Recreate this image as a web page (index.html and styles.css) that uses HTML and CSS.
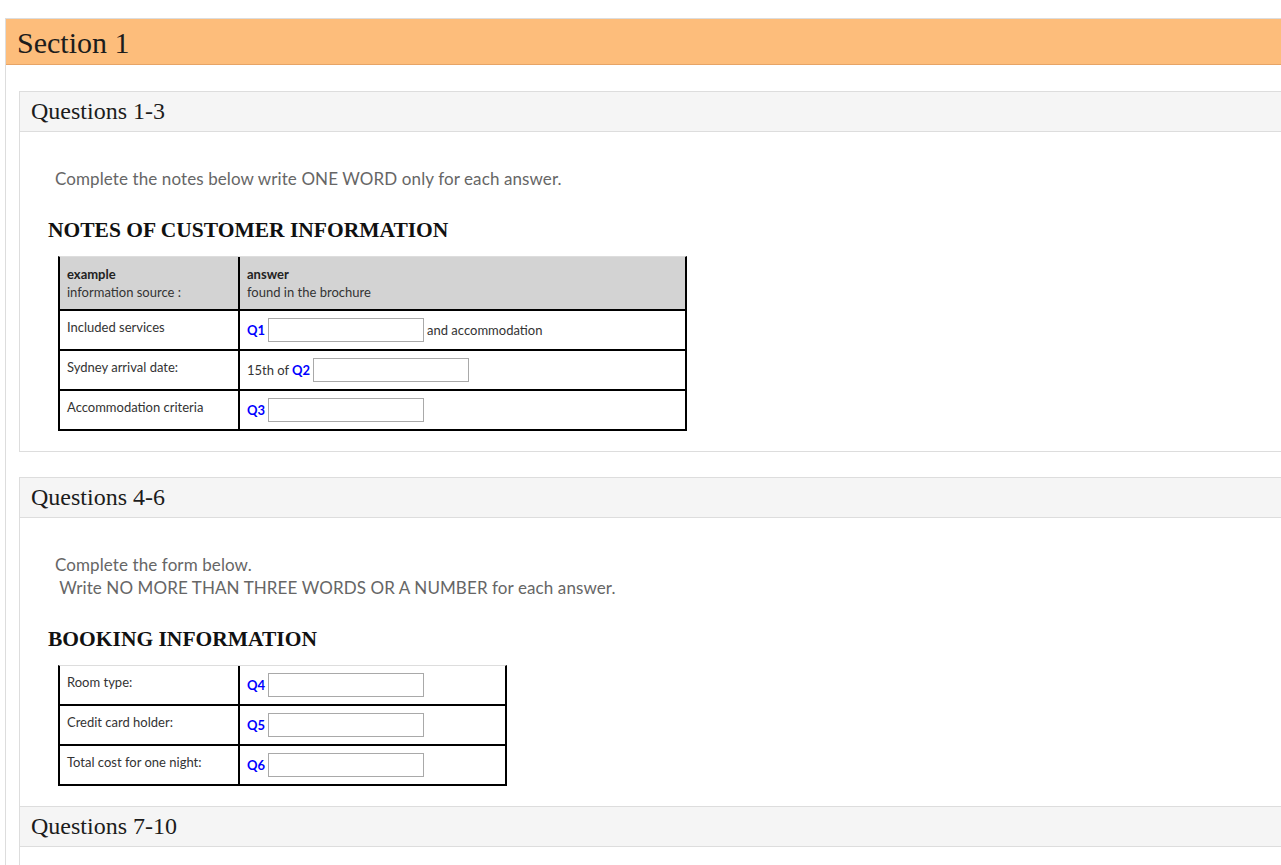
FILE: index.html
```html
<!DOCTYPE html>
<html lang="en">
<head>
<meta charset="utf-8">
<title>Section 1</title>
<link rel="stylesheet" href="styles.css">
</head>
<body>
<div class="section-panel">
  <div class="section-head">Section 1</div>
  <div class="section-body">

    <div class="q-panel q-panel-spaced">
      <div class="q-head">Questions 1-3</div>
      <div class="q-body">
        <p class="instr">Complete the notes below write ONE WORD only for each answer.</p>
        <h4 class="notes-title">NOTES OF CUSTOMER INFORMATION</h4>
        <table class="qtable qtable-wide">
          <tr class="head-row">
            <td class="label"><b>example</b><br>information source :</td>
            <td class="value"><b>answer</b><br>found in the brochure</td>
          </tr>
          <tr>
            <td class="label">Included services</td>
            <td class="value"><div class="answer"><b class="qnum">Q1</b><input type="text" class="ans-input"><span>and accommodation</span></div></td>
          </tr>
          <tr>
            <td class="label">Sydney arrival date:</td>
            <td class="value"><div class="answer"><span>15th of</span><b class="qnum">Q2</b><input type="text" class="ans-input"></div></td>
          </tr>
          <tr>
            <td class="label">Accommodation criteria</td>
            <td class="value"><div class="answer"><b class="qnum">Q3</b><input type="text" class="ans-input"></div></td>
          </tr>
        </table>
      </div>
    </div>

    <div class="q-panel">
      <div class="q-head">Questions 4-6</div>
      <div class="q-body">
        <p class="instr">Complete the form below.<br>&nbsp;Write NO MORE THAN THREE WORDS OR A NUMBER for each answer.</p>
        <h4 class="notes-title">BOOKING INFORMATION</h4>
        <table class="qtable qtable-narrow">
          <tr>
            <td class="label">Room type:</td>
            <td class="value"><div class="answer"><b class="qnum">Q4</b><input type="text" class="ans-input"></div></td>
          </tr>
          <tr>
            <td class="label">Credit card holder:</td>
            <td class="value"><div class="answer"><b class="qnum">Q5</b><input type="text" class="ans-input"></div></td>
          </tr>
          <tr>
            <td class="label">Total cost for one night:</td>
            <td class="value"><div class="answer"><b class="qnum">Q6</b><input type="text" class="ans-input"></div></td>
          </tr>
        </table>
      </div>
    </div>

    <div class="q-panel q-panel-joined">
      <div class="q-head">Questions 7-10</div>
      <div class="q-body q-body-empty"></div>
    </div>

  </div>
</div>
</body>
</html>
```

FILE: styles.css
```css
html, body {
  margin: 0;
  padding: 0;
  background: #fff;
  overflow: hidden;
}

body {
  font-family: Lato, "Open Sans", sans-serif;
  color: #333;
}

.section-panel {
  margin: 18px 0 0 5px;
  width: 1320px;
  border: 1px solid #ddd;
  border-right: none;
}

.section-head {
  box-sizing: border-box;
  height: 46px;
  line-height: 45px;
  padding: 1px 0 0 11px;
  background: #fdbd7b;
  border-bottom: 1px solid #e7a466;
  font-family: "Liberation Serif", serif;
  font-size: 30px;
  color: #1c1c1c;
}

.section-body {
  padding: 26px 0 0 13px;
}

.q-panel {
  border: 1px solid #ddd;
  border-right: none;
  background: #fff;
}

.q-panel-spaced {
  margin-bottom: 25px;
}

.q-panel-joined {
  border-top: none;
}

.q-head {
  height: 39px;
  line-height: 39px;
  padding-left: 11px;
  background: #f5f5f5;
  border-bottom: 1px solid #ddd;
  font-family: "Liberation Serif", serif;
  font-size: 24px;
  color: #1c1c1c;
}

.q-body {
  padding: 35px 0 20px 28px;
}

.q-body-empty {
  height: 40px;
}

.instr {
  margin: 0;
  padding-left: 7px;
  font-size: 17px;
  line-height: 23px;
  letter-spacing: 0.1px;
  color: #666;
}

.notes-title {
  margin: 28px 0 13px 0;
  font-family: "Liberation Serif", serif;
  font-weight: bold;
  font-size: 21.5px;
  line-height: 25px;
  color: #111;
}

.qtable {
  margin-left: 10px;
  border-collapse: separate;
  border-spacing: 0;
  table-layout: fixed;
  border-top: 1px solid #ddd;
  border-left: 2px solid #000;
  border-right: 2px solid #000;
  box-sizing: border-box;
  font-size: 13px;
  line-height: 18px;
  color: #333;
}

.qtable-wide {
  width: 629px;
}

.qtable-narrow {
  width: 449px;
}

.qtable td {
  box-sizing: border-box;
  padding: 7px 7px;
  vertical-align: top;
  border-bottom: 2px solid #000;
}

.qtable td.label {
  width: 180px;
  border-right: 2px solid #000;
}

.head-row td {
  background: #d3d3d3;
  padding-top: 8px;
  padding-bottom: 8px;
}

.head-row b {
  color: #222;
}

.answer {
  display: flex;
  align-items: center;
  gap: 3px;
  height: 24px;
}

.qnum {
  color: #0000ff;
  font-weight: bold;
}

.ans-input {
  box-sizing: border-box;
  width: 156px;
  height: 24px;
  margin: 0;
  padding: 2px 4px;
  border: 1px solid #a9a9a9;
  border-radius: 0;
  background: #fff;
  font: inherit;
}
```
